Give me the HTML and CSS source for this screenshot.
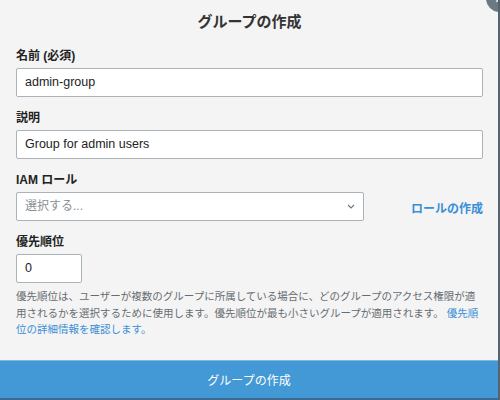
FILE: index.html
```html
<!DOCTYPE html>
<html lang="ja">
<head>
  <meta charset="UTF-8">
  <meta name="viewport" content="width=device-width, initial-scale=1.0">
  <title>グループの作成</title>
  <link rel="stylesheet" href="styles.css">
</head>
<body>
<div class="modal">
  <span class="modal-close">&times;</span>
  <div class="modal-body">
    <h2>グループの作成</h2>

    <div class="form-group">
      <label>名前 (必須)</label>
      <div class="field">admin-group</div>
    </div>

    <div class="form-group">
      <label>説明</label>
      <div class="field">Group for admin users</div>
    </div>

    <div class="form-group">
      <label>IAM ロール</label>
      <div class="role-row">
        <div class="field select">
          <span class="placeholder">選択する...</span>
          <svg width="8" height="5" viewBox="0 0 8 5"><path d="M1 1 L4 4 L7 1" fill="none" stroke="#6f7880" stroke-width="1.2"/></svg>
        </div>
        <a class="link strong" href="#">ロールの作成</a>
      </div>
    </div>

    <div class="form-group">
      <label>優先順位</label>
      <div class="field small">0</div>
      <p class="help">優先順位は、ユーザーが複数のグループに所属している場合に、どのグループのアクセス権限が適用されるかを選択するために使用します。優先順位が最も小さいグループが適用されます。 <a class="link" href="#">優先順位の詳細情報を確認します。</a></p>
    </div>
  </div>

  <button class="submit">グループの作成</button>
</div>
</body>
</html>
```

FILE: styles.css
```css
body {
  margin: 0;
  font-family: "Liberation Sans", "Noto Sans CJK JP", sans-serif;
  color: #333;
}
.modal {
  position: relative;
  width: 500px;
  height: 400px;
  box-sizing: border-box;
  background-color: #f4f4f4;
  border-right: 2px solid #56636e;
  border-bottom: 2px solid #3d6a90;
  display: flex;
  flex-direction: column;
  overflow: hidden;
}
.modal-close {
  position: absolute;
  top: -15px;
  right: -15px;
  width: 27px;
  height: 27px;
  border-radius: 50%;
  background-color: #6b7983;
  color: #fff;
  font-size: 16px;
  line-height: 27px;
  text-align: center;
}
.modal-body {
  flex: 1;
  padding: 0 15px 0 16px;
}
h2 {
  margin: 12px 0 16px;
  font-size: 15px;
  line-height: 20px;
  text-align: center;
  color: #333;
}
.form-group {
  margin-bottom: 13px;
}
label {
  display: block;
  font-size: 12px;
  font-weight: bold;
  line-height: 16px;
  margin-bottom: 4px;
  color: #222;
}
.field {
  height: 29px;
  box-sizing: border-box;
  background-color: #fff;
  border: 1px solid #aab3ba;
  border-radius: 2px;
  padding: 0 8px;
  font-size: 12.5px;
  line-height: 27px;
  color: #222;
}
.role-row {
  display: flex;
  align-items: center;
  justify-content: space-between;
}
.select {
  width: 348px;
  display: flex;
  align-items: center;
  justify-content: space-between;
}
.placeholder {
  color: #8a8f94;
  font-size: 12px;
}
.small {
  width: 66px;
}
.link {
  color: #3b8fd6;
  text-decoration: none;
}
.strong {
  font-size: 12px;
  font-weight: bold;
  margin-top: 1px;
}
.help {
  margin: 5px 0 0;
  font-size: 10.5px;
  line-height: 16.5px;
  color: #666c72;
}
.submit {
  height: 38px;
  border: none;
  border-top: 1px solid #7db8e2;
  background-color: #4399d6;
  color: #fff;
  font-family: "Liberation Sans", "Noto Sans CJK JP", sans-serif;
  font-size: 12px;
}
```
